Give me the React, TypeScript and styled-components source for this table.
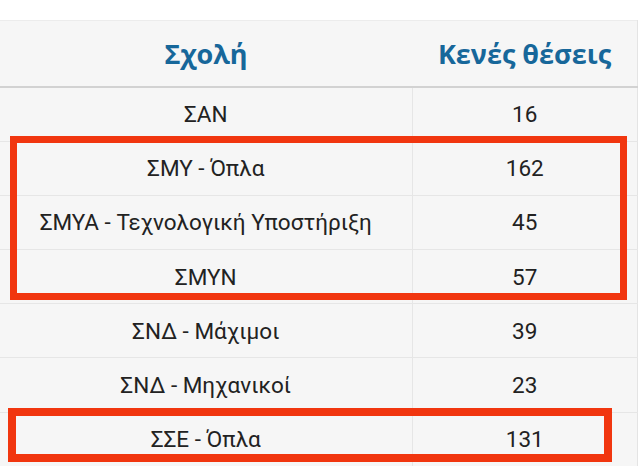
import React from 'react';
import styled, { createGlobalStyle } from 'styled-components';

const GlobalStyle = createGlobalStyle`
  html, body {
    margin: 0;
    padding: 0;
    background: #ffffff;
  }
  body {
    font-family: Roboto, "Noto Sans", sans-serif;
    overflow: hidden;
  }
`;

const Page = styled.div`
  width: 639px;
  height: 466px;
  padding-top: 20px;
  box-sizing: border-box;
  position: relative;
  overflow: hidden;
`;

const Table = styled.table`
  width: 638px;
  border-collapse: collapse;
  background: #f6f6f6;
  border-top: 1px solid #ececec;
  border-right: 1px solid #e4e4e4;
`;

const HeadCell = styled.th<{ $w?: number }>`
  height: 65px;
  padding: 0;
  width: ${(p) => (p.$w ? `${p.$w}px` : 'auto')};
  text-align: center;
  font-family: "Open Sans", "Noto Sans", sans-serif;
  font-weight: 700;
  font-size: 27px;
  color: #17679a;
  border-bottom: 2px solid #d2d2d2;
`;

const Row = styled.tr`
  height: 54.2px;
  border-bottom: 1px solid #e6e6e6;
`;

const Cell = styled.td<{ $divider?: boolean }>`
  padding: 0;
  text-align: center;
  font-size: 22.5px;
  color: #222222;
  border-left: ${(p) => (p.$divider ? '1px solid #e6e6e6' : 'none')};
`;

const Highlight = styled.div<{ $x: number; $y: number; $w: number; $h: number; $s: number }>`
  position: absolute;
  left: ${(p) => p.$x}px;
  top: ${(p) => p.$y}px;
  width: ${(p) => p.$w}px;
  height: ${(p) => p.$h}px;
  box-sizing: border-box;
  border: ${(p) => p.$s}px solid #f1360f;
  pointer-events: none;
`;

const rows = [
  { school: 'ΣΑΝ', seats: 16 },
  { school: 'ΣΜΥ - Όπλα', seats: 162 },
  { school: 'ΣΜΥΑ - Τεχνολογική Υποστήριξη', seats: 45 },
  { school: 'ΣΜΥΝ', seats: 57 },
  { school: 'ΣΝΔ - Μάχιμοι', seats: 39 },
  { school: 'ΣΝΔ - Μηχανικοί', seats: 23 },
  { school: 'ΣΣΕ - Όπλα', seats: 131 },
];

const App: React.FC = () => {
  return (
    <Page>
      <GlobalStyle />
      <Table>
        <thead>
          <tr>
            <HeadCell $w={412}>Σχολή</HeadCell>
            <HeadCell>Κενές θέσεις</HeadCell>
          </tr>
        </thead>
        <tbody>
          {rows.map((r) => (
            <Row key={r.school}>
              <Cell>{r.school}</Cell>
              <Cell $divider>{r.seats}</Cell>
            </Row>
          ))}
        </tbody>
      </Table>
      <Highlight $x={10} $y={136} $w={617} $h={164} $s={7} />
      <Highlight $x={8} $y={408} $w={604} $h={54} $s={8} />
    </Page>
  );
};

export default App;
